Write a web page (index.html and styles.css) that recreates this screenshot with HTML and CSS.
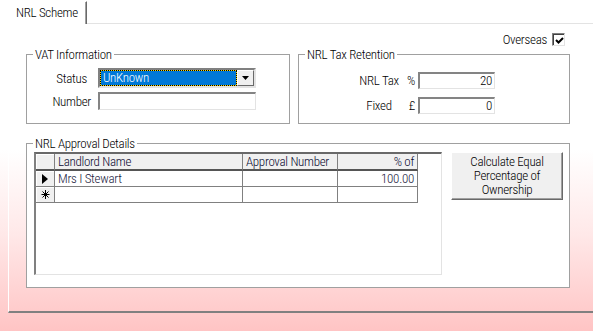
FILE: index.html
```html
<!DOCTYPE html>
<html lang="en">
<head>
  <meta charset="UTF-8">
  <title>NRL Scheme</title>
  <link rel="stylesheet" href="styles.css">
</head>
<body>
  <div class="tabs">
    <div class="tab">NRL Scheme</div>
    <div class="tab-fill"></div>
  </div>

  <div class="page">
    <div class="overseas">
      <span>Overseas</span>
      <span class="check">
        <svg width="9" height="9" viewBox="0 0 9 9"><path d="M1 4 L3.5 6.5 L8 2" fill="none" stroke="#000" stroke-width="2"/></svg>
      </span>
    </div>

    <div class="top-row">
      <fieldset class="group vat">
        <legend>VAT Information</legend>
        <div class="vat-grid">
          <label class="status-lbl">Status</label>
          <div class="combo">
            <div class="combo-value">UnKnown</div>
            <div class="combo-btn">
              <svg width="7" height="4" viewBox="0 0 7 4"><path d="M0 0 H7 L3.5 4 Z" fill="#000"/></svg>
            </div>
          </div>
          <label>Number</label>
          <div class="textbox"></div>
        </div>
      </fieldset>

      <fieldset class="group tax">
        <legend>NRL Tax Retention</legend>
        <div class="tax-grid">
          <span class="lbl">NRL Tax</span>
          <span class="sym">%</span>
          <div class="textbox num">20</div>
          <span class="lbl">Fixed</span>
          <span class="sym">£</span>
          <div class="textbox num">0</div>
        </div>
      </fieldset>
    </div>

    <fieldset class="group approval">
      <legend>NRL Approval Details</legend>
      <div class="approval-body">
        <div class="datagrid">
          <div class="cells">
            <div class="cell sel head"></div>
            <div class="cell head">Landlord Name</div>
            <div class="cell head">Approval Number</div>
            <div class="cell head right">% of</div>

            <div class="cell sel">
              <svg width="6" height="10" viewBox="0 0 6 10"><path d="M0 0 L6 5 L0 10 Z" fill="#000"/></svg>
            </div>
            <div class="cell">Mrs I Stewart</div>
            <div class="cell"></div>
            <div class="cell right">100.00</div>

            <div class="cell sel">
              <svg width="9" height="9" viewBox="0 0 9 9"><path d="M4.5 0 V9 M0.5 4.5 H8.5 M1.5 1.5 L7.5 7.5 M7.5 1.5 L1.5 7.5" stroke="#000" stroke-width="1"/></svg>
            </div>
            <div class="cell"></div>
            <div class="cell"></div>
            <div class="cell"></div>
          </div>
        </div>
        <button class="calc">Calculate Equal<br>Percentage of<br>Ownership</button>
      </div>
    </fieldset>
  </div>
</body>
</html>
```

FILE: styles.css
```css
body {
  margin: 0;
  height: 331px;
  overflow: hidden;
  font-family: Roboto, "Liberation Sans", sans-serif;
  font-stretch: 75%;
  font-weight: 350;
  font-size: 13px;
  letter-spacing: -0.3px;
  line-height: 15px;
  color: #000;
  background: linear-gradient(to bottom, #ffffff 0px, #ffffff 150px, #ffe8e8 235px, #ffc4c4 331px);
}

/* tab strip */
.tabs {
  display: flex;
  margin-top: 1px;
  padding-left: 8px;
  height: 23px;
}
.tab {
  width: 79px;
  box-sizing: border-box;
  padding: 3px 0 0 7px;
  white-space: nowrap;
  background: #fff;
  border-left: 1px solid #fff;
  border-top: 1px solid #fff;
  border-right: 1px solid #696969;
  box-shadow: inset -1px 0 #a0a0a0;
}
.tab-fill {
  flex: 1;
  border-bottom: 1px solid #e3e3e3;
}

.page {
  margin-left: 8px;
  height: 287px;
  border-left: 1px solid #fff;
  border-bottom: 2px solid #808080;
}

.overseas {
  display: flex;
  justify-content: flex-end;
  align-items: center;
  gap: 5px;
  height: 13px;
  padding: 9px 28px 0 0;
}
.check {
  width: 13px;
  height: 13px;
  box-sizing: border-box;
  display: flex;
  align-items: center;
  justify-content: center;
  background: #fff;
  border: 1px solid;
  border-color: #808080 #e3e3e3 #e3e3e3 #808080;
  box-shadow: inset 1px 1px #404040;
  padding: 1px 0 0 1px;
}

/* group boxes */
.group {
  margin: 0;
  padding: 0;
  min-width: 0;
  background: #fff;
  border: 1px solid #a0a0a0;
}
.group legend {
  margin-left: 6px;
  padding: 0 2px;
  line-height: 15px;
}

.top-row {
  display: flex;
  gap: 8px;
  margin: 1px 0 0 17px;
}
.vat {
  width: 264px;
  box-sizing: border-box;
  padding: 6px 0 13px;
}
.tax {
  width: 272px;
  box-sizing: border-box;
  padding: 10px 0 9px;
}

.vat-grid {
  display: grid;
  grid-template-columns: 64px 158px;
  column-gap: 7px;
  row-gap: 4px;
  align-items: center;
}
.vat-grid label {
  text-align: right;
}
.vat-grid .status-lbl {
  padding-right: 4px;
}

.combo {
  display: flex;
  height: 20px;
  box-sizing: border-box;
  border: 2px solid;
  border-color: #808080 #e3e3e3 #e3e3e3 #808080;
  background: #fff;
}
.combo-value {
  flex: 1;
  background: #0078d7;
  color: #fff;
  border: 1px solid #ffd800;
  outline: 1px dotted #000;
  outline-offset: -1px;
  padding-left: 2px;
  line-height: 14px;
}
.combo-btn {
  width: 17px;
  display: flex;
  align-items: center;
  justify-content: center;
  background: #f0f0f0;
  box-sizing: border-box;
  border: 1px solid;
  border-color: #fff #696969 #696969 #fff;
}

.textbox {
  height: 18px;
  box-sizing: border-box;
  background: #fff;
  border-style: solid;
  border-width: 2px 1px 1px 2px;
  border-color: #848484 #e3e3e3 #e3e3e3 #848484;
}
.textbox.num {
  height: 17px;
  text-align: right;
  padding-right: 2px;
  line-height: 14px;
}

.tax-grid {
  display: grid;
  grid-template-columns: 56px 13px 77px;
  justify-content: end;
  padding-right: 74px;
  row-gap: 8px;
  align-items: center;
}
.tax-grid .lbl {
  text-align: center;
  padding-left: 4px;
}
.tax-grid .sym {
  text-align: right;
  padding-right: 3px;
}

/* approval details */
.approval {
  width: 544px;
  box-sizing: border-box;
  margin: 12px 0 0 17px;
}
.approval-body {
  display: flex;
  align-items: flex-start;
  gap: 9px;
  padding: 1px 6px 12px 7px;
}

.datagrid {
  width: 408px;
  height: 123px;
  box-sizing: border-box;
  background: #fff;
  border-style: solid;
  border-width: 2px 1px 1px 2px;
  border-color: #696969 #e3e3e3 #e3e3e3 #808080;
}
.cells {
  display: grid;
  grid-template-columns: 19px 188px 95px 80px;
  grid-template-rows: 17px 16px 16px;
  color: #1a1a40;
}
.cell {
  box-sizing: border-box;
  border-right: 1px solid #808080;
  border-bottom: 1px solid #808080;
  padding: 0 3px;
  line-height: 15px;
  white-space: nowrap;
  overflow: hidden;
}
.cell.head {
  background: #f0f0f0;
  border-bottom: 2px solid #555;
  color: #0a0a30;
}
.cell.right {
  text-align: right;
}
.cell.sel {
  background: #f0f0f0;
  padding: 0;
  display: flex;
  align-items: center;
  justify-content: center;
  box-shadow: inset 1px 1px #fff;
}

.calc {
  width: 112px;
  height: 48px;
  padding: 0;
  font: inherit;
  letter-spacing: inherit;
  line-height: 14px;
  color: #000;
  background: #f0f0f0;
  border: 1px solid;
  border-color: #fff #696969 #696969 #fff;
  box-shadow: inset -1px -1px #a0a0a0;
}
```
